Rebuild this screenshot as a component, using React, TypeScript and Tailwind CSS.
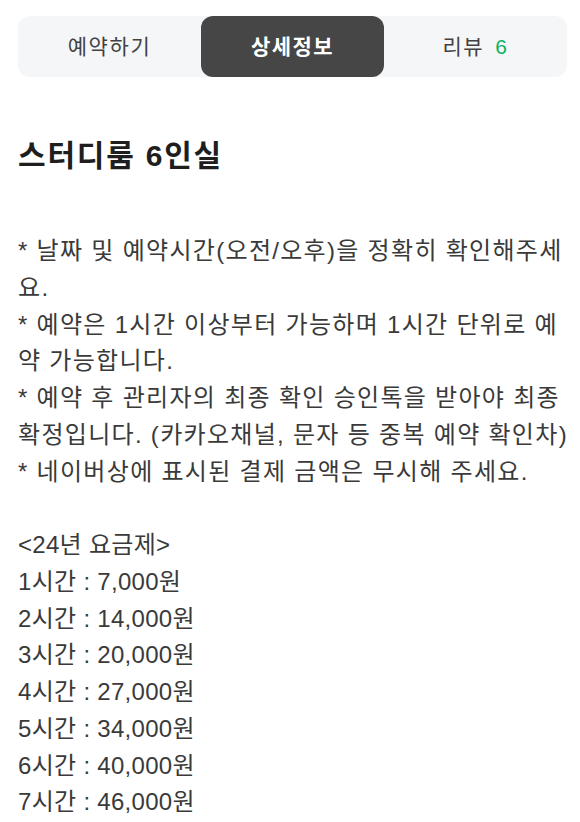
const body = [
  "* 날짜 및 예약시간(오전/오후)을 정확히 확인해주세",
  "요.",
  "* 예약은 1시간 이상부터 가능하며 1시간 단위로 예",
  "약 가능합니다.",
  "* 예약 후 관리자의 최종 확인 승인톡을 받아야 최종",
  "확정입니다. (카카오채널, 문자 등 중복 예약 확인차)",
  "* 네이버상에 표시된 결제 금액은 무시해 주세요.",
];

const prices = [
  "<24년 요금제>",
  "1시간 : 7,000원",
  "2시간 : 14,000원",
  "3시간 : 20,000원",
  "4시간 : 27,000원",
  "5시간 : 34,000원",
  "6시간 : 40,000원",
  "7시간 : 46,000원",
];

export default function App() {
  return (
    <div
      className="min-h-screen bg-white pl-[18px] pr-[13px] pt-4"
      style={{ fontFamily: '"Liberation Sans", "Noto Sans CJK KR", sans-serif' }}
    >
      {/* Tabs */}
      <div className="grid grid-cols-3 h-[61px] rounded-[12px] bg-[#f5f6f8]">
        <button className="flex items-center justify-center text-[21px] tracking-[1.6px] text-[#424242]">
          예약하기
        </button>
        <button className="flex items-center justify-center rounded-[12px] bg-[#464646] text-[21px] font-bold tracking-[1.4px] text-white">
          상세정보
        </button>
        <button className="flex items-center justify-center text-[21px] tracking-[1.6px] text-[#424242]">
          리뷰<span className="ml-[11px] text-[#0fb25f]">6</span>
        </button>
      </div>

      <h1 className="mt-[56px] text-[30px] font-bold leading-[45px] tracking-[1.8px] text-[#1e1e1e]">
        스터디룸 6인실
      </h1>

      <div className="mt-[55px] text-[24px] leading-[36.75px] text-[#3a3a3a]">
        {body.map((line) => (
          <div key={line} className="whitespace-nowrap tracking-[1.3px]">
            {line}
          </div>
        ))}
        <div className="h-[36.75px]" />
        {prices.map((line) => (
          <div key={line} className="whitespace-nowrap tracking-[0.3px]">
            {line}
          </div>
        ))}
      </div>
    </div>
  );
}
